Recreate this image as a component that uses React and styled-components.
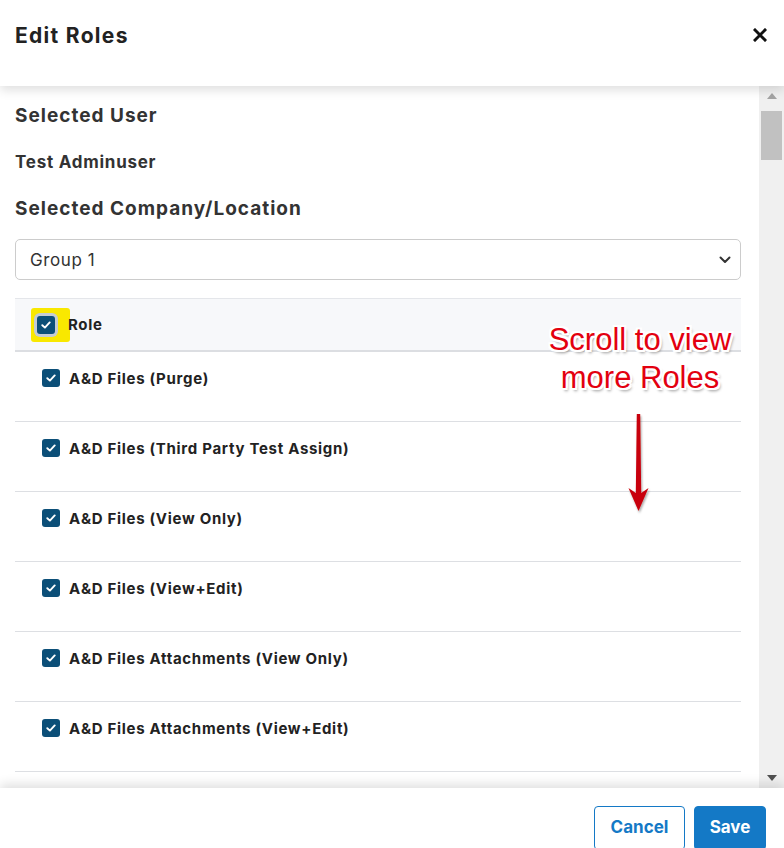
import styled, { createGlobalStyle } from "styled-components";

const GlobalStyle = createGlobalStyle`
  html, body {
    margin: 0;
    padding: 0;
    background: #fff;
  }
  body {
    font-family: Inter, "Open Sans", "Liberation Sans", sans-serif;
    color: #333;
  }
`;

const Modal = styled.div`
  width: 784px;
  height: 848px;
  display: flex;
  flex-direction: column;
  overflow: hidden;
  background: #fff;
`;

const Header = styled.div`
  position: relative;
  z-index: 2;
  height: 86px;
  flex: none;
  display: flex;
  align-items: flex-start;
  justify-content: space-between;
  padding: 22px 17px 0 15px;
  box-sizing: border-box;
  background: #fff;
  box-shadow: 0 4px 10px rgba(0, 0, 0, 0.13);
`;

const Title = styled.h2`
  margin: 0;
  font-size: 21px;
  line-height: 27px;
  font-weight: 700;
  letter-spacing: 1.3px;
  color: #222;
`;

const CloseButton = styled.button`
  border: 0;
  background: none;
  padding: 0;
  margin-top: 6px;
  width: 14px;
  height: 14px;
  display: flex;
`;

const Body = styled.div`
  position: relative;
  flex: 1;
  display: flex;
  min-height: 0;
`;

const Content = styled.div`
  flex: 1;
  overflow: hidden;
  padding: 0 18px 0 15px;
`;

const SectionTitle = styled.h3`
  margin: ${(p) => p.$top}px 0 0;
  font-size: ${(p) => p.$size}px;
  line-height: 24px;
  font-weight: 700;
  letter-spacing: ${(p) => p.$spacing}px;
  color: #333;
`;

const Select = styled.div`
  margin-top: 18px;
  height: 41px;
  box-sizing: border-box;
  border: 1px solid #ccc;
  border-radius: 5px;
  display: flex;
  align-items: center;
  justify-content: space-between;
  padding: 0 9px 0 14px;
  font-size: 17px;
  letter-spacing: 0.6px;
  color: #333;
`;

const Table = styled.div`
  margin-top: 18px;
  border-top: 1px solid #e4e6ea;
`;

const HeadRow = styled.div`
  height: 51px;
  display: flex;
  align-items: center;
  padding-left: 16px;
  background: #f7f8fa;
  border-bottom: 2px solid #dcdee2;
  font-size: 15px;
  font-weight: 700;
  color: #222;
`;

const Highlight = styled.span`
  width: 39px;
  height: 34px;
  margin-right: -2px;
  border-radius: 3px;
  background: #f9e800;
  display: flex;
  align-items: center;
  justify-content: center;
`;

const Row = styled.div`
  height: 70px;
  display: flex;
  align-items: flex-start;
  padding: 17px 0 0 27px;
  box-sizing: border-box;
  border-bottom: 1px solid #dddfe3;
  font-size: 15px;
  font-weight: 700;
  color: #222;
`;

const Box = styled.span`
  width: 18px;
  height: 18px;
  flex: none;
  border-radius: 3px;
  background: #0c4f78;
  display: flex;
  align-items: center;
  justify-content: center;
  margin-right: 9px;
  box-shadow: ${(p) => (p.$focus ? "0 0 0 3px #c4ccd4" : "none")};
`;

const Label = styled.span`
  line-height: 20px;
  letter-spacing: 0.7px;
`;

const Scrollbar = styled.div`
  width: 25px;
  flex: none;
  background: #f0f0f0;
  display: flex;
  flex-direction: column;
  align-items: center;
`;

const ArrowBtn = styled.div`
  height: 20px;
  display: flex;
  align-items: center;
  justify-content: center;
`;

const Thumb = styled.div`
  width: 21px;
  height: 49px;
  margin-top: 5px;
  background: #c1c1c1;
`;

const Track = styled.div`
  flex: 1;
`;

const Note = styled.div`
  position: absolute;
  left: 530px;
  top: 235px;
  width: 220px;
  text-align: center;
  font-family: "Liberation Sans", Arial, sans-serif;
  font-size: 31px;
  line-height: 38px;
  color: #e3000f;
  text-shadow: -2px 0 0 #fff, 2px 0 0 #fff, 0 -2px 0 #fff, 0 2px 0 #fff,
    -2px -2px 0 #fff, 2px 2px 0 #fff, -2px 2px 0 #fff, 2px -2px 0 #fff,
    2px 3px 3px rgba(0, 0, 0, 0.45);
`;

const NoteArrow = styled.svg`
  position: absolute;
  left: 624px;
  top: 327px;
`;

const Footer = styled.div`
  position: relative;
  z-index: 2;
  height: 60px;
  flex: none;
  display: flex;
  justify-content: flex-end;
  align-items: flex-start;
  gap: 9px;
  padding: 18px 18px 0 0;
  box-sizing: border-box;
  background: #fff;
  box-shadow: 0 -4px 10px rgba(0, 0, 0, 0.12);
`;

const Button = styled.button`
  height: 44px;
  width: ${(p) => p.$width}px;
  padding: 0 0 2px;
  border-radius: 4px;
  border: 1px solid #1479c6;
  background: ${(p) => (p.$primary ? "#1479c6" : "#fff")};
  color: ${(p) => (p.$primary ? "#fff" : "#1479c6")};
  font-family: Inter, "Open Sans", "Liberation Sans", sans-serif;
  font-size: 17px;
  font-weight: 700;
`;

const roles = [
  "A&D Files (Purge)",
  "A&D Files (Third Party Test Assign)",
  "A&D Files (View Only)",
  "A&D Files (View+Edit)",
  "A&D Files Attachments (View Only)",
  "A&D Files Attachments (View+Edit)",
];

function Check() {
  return (
    <svg width="10" height="8" viewBox="0 0 10 8">
      <path
        d="M1.3 4.2 L3.9 6.6 L8.7 1.4"
        fill="none"
        stroke="#fff"
        strokeWidth="1.9"
        strokeLinecap="round"
        strokeLinejoin="round"
      />
    </svg>
  );
}

function App() {
  return (
    <>
      <GlobalStyle />
      <Modal>
        <Header>
          <Title>Edit Roles</Title>
          <CloseButton aria-label="Close">
            <svg width="14" height="14" viewBox="0 0 14 14">
              <path
                d="M2 2 L12 12 M12 2 L2 12"
                stroke="#111"
                strokeWidth="3"
                strokeLinecap="square"
              />
            </svg>
          </CloseButton>
        </Header>

        <Body>
          <Content>
            <SectionTitle $top={18} $size={19} $spacing={1}>
              Selected User
            </SectionTitle>
            <SectionTitle $top={22} $size={17} $spacing={0.75}>
              Test Adminuser
            </SectionTitle>
            <SectionTitle $top={23} $size={19} $spacing={1}>
              Selected Company/Location
            </SectionTitle>

            <Select>
              <span>Group 1</span>
              <svg width="12" height="8" viewBox="0 0 12 8">
                <path
                  d="M1.5 1.5 L6 6 L10.5 1.5"
                  fill="none"
                  stroke="#333"
                  strokeWidth="2"
                  strokeLinecap="round"
                  strokeLinejoin="round"
                />
              </svg>
            </Select>

            <Table>
              <HeadRow>
                <Highlight>
                  <Box $focus>
                    <Check />
                  </Box>
                </Highlight>
                <Label>Role</Label>
              </HeadRow>
              {roles.map((role) => (
                <Row key={role}>
                  <Box>
                    <Check />
                  </Box>
                  <Label>{role}</Label>
                </Row>
              ))}
            </Table>
          </Content>

          <Scrollbar>
            <ArrowBtn>
              <svg width="10" height="6" viewBox="0 0 10 6">
                <path d="M0 6 L5 0 L10 6 Z" fill="#a3a3a3" />
              </svg>
            </ArrowBtn>
            <Thumb />
            <Track />
            <ArrowBtn>
              <svg width="10" height="6" viewBox="0 0 10 6">
                <path d="M0 0 L10 0 L5 6 Z" fill="#505050" />
              </svg>
            </ArrowBtn>
          </Scrollbar>

          <Note>
            Scroll to view
            <br />
            more Roles
          </Note>
          <NoteArrow width="30" height="102" viewBox="0 0 30 102">
            <defs>
              <filter id="sh" x="-50%" y="-10%" width="200%" height="130%">
                <feDropShadow dx="1" dy="2" stdDeviation="1.2" floodOpacity="0.35" />
              </filter>
            </defs>
            <path
              d="M12.8 1 L16.2 1 L17.2 80 L24.5 75 L14.5 98 L4.5 75 L11.8 80 Z"
              fill="#c8000a"
              filter="url(#sh)"
            />
          </NoteArrow>
        </Body>

        <Footer>
          <Button $width={91}>Cancel</Button>
          <Button $primary $width={72}>
            Save
          </Button>
        </Footer>
      </Modal>
    </>
  );
}

export default App;
